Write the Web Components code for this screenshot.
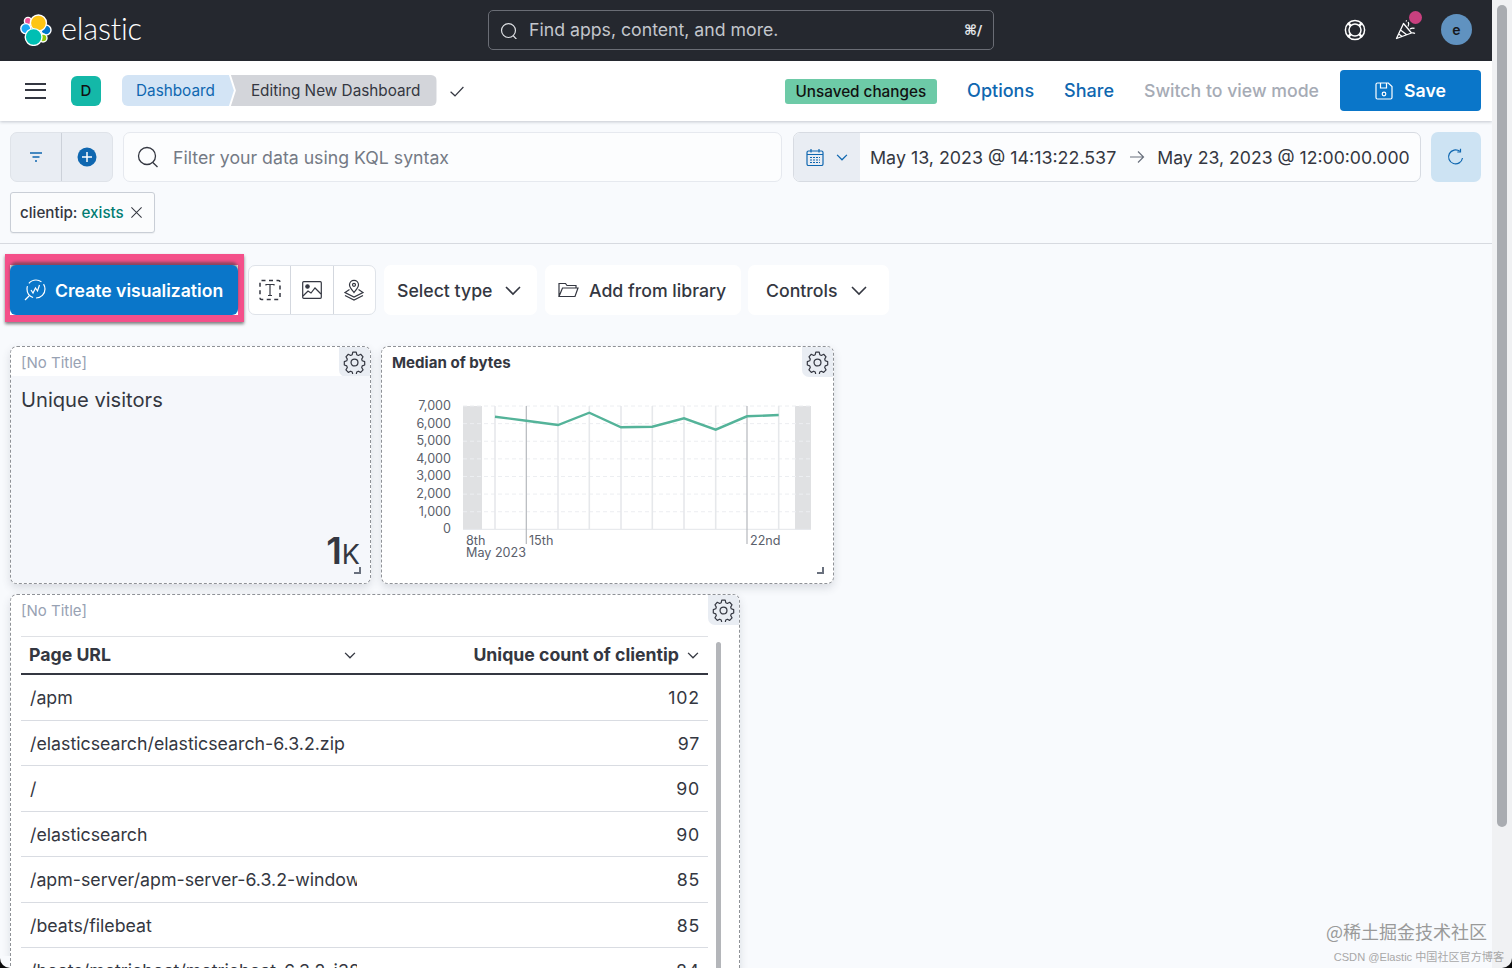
<!DOCTYPE html>
<html lang="en">
<head>
<meta charset="utf-8">
<title>Editing New Dashboard - Elastic</title>
<style>
html, body { margin: 0; height: 100%; overflow: hidden; background: #f8fafd; }
body { font-family: Inter, "Noto Sans CJK SC", sans-serif; color: #343741; }
</style>
</head>
<body>
<kbn-shell>
  <kbn-header></kbn-header>
  <kbn-nav></kbn-nav>
  <kbn-querybar></kbn-querybar>
  <kbn-toolbar></kbn-toolbar>
  <kbn-grid></kbn-grid>
</kbn-shell>
<script>
const ICONS = {
    search: `<circle cx="10" cy="10" r="8.2"/><path d="M15.6 16.2l4 4.3"/>`,
    gear: `<path d="M10.1 1.6h3.8l.6 2.9 1.7.8 2.6-1.3 2.6 2.8-1.5 2.5.6 1.8 2.7 1v3.7l-2.7 1-.6 1.8 1.5 2.5-2.6 2.8-2.6-1.3-1.7.8-.6 2.9h-3.8l-.6-2.9-1.7-.8-2.6 1.3-2.6-2.8 1.5-2.5-.6-1.8-2.7-1v-3.7l2.7-1 .6-1.8-1.5-2.5 2.6-2.8 2.6 1.3 1.7-.8z" transform="translate(.6 -.4) scale(.95)" stroke-linejoin="round"/><circle cx="12" cy="12" r="3.6"/>`,
    chevron: `<path d="M3 7l7 7 7-7"/>`,
    check: `<path d="M2 11l5.5 5L18 5"/>`,
    close: `<path d="M4 4l12 12M16 4L4 16"/>`
};

function define(tag, html) {
    customElements.define(tag, class extends HTMLElement {
        constructor() {
            super();
            this.attachShadow({mode: "open"}).innerHTML = html;
        }
    });
}

define("kbn-shell", `
<style>
:host { display: block; height: 968px; width: 1512px; position: relative; overflow: hidden; }
.main { width: 1492px; height: 968px; overflow: hidden; }
.track { position: absolute; top: 0; right: 0; bottom: 0; width: 20px; background: #f0f1f3; }
.thumb { margin: 5px 5px 0; width: 10px; height: 822px; border-radius: 5px; background: #a9acb1; }
.corner { position: absolute; bottom: 0; width: 10px; height: 12px; background: #0b0b0c; }
.corner.l { left: 0; }
.corner.r { right: 0; }
.corner::after { content: ""; position: absolute; inset: 0; }
.corner.l::after { border-bottom-left-radius: 10px; background: #f8fafd; }
.corner.r::after { border-bottom-right-radius: 10px; background: #f0f1f3; }
.mark { position: absolute; color: #9a9a9a; white-space: nowrap; }
.m1 { right: 25px; bottom: 26px; font: 18px/22px "Noto Sans CJK SC", sans-serif; }
.m2 { right: 8px; bottom: 4px; font: 11.1px/14px "Liberation Sans", "Noto Sans CJK SC", sans-serif; color: #a8a8a8; }
</style>
<div class="main"><slot></slot></div>
<div class="track"><div class="thumb"></div></div>
<div class="corner l"></div>
<div class="corner r"></div>
<div class="mark m1">@稀土掘金技术社区</div>
<div class="mark m2">CSDN @Elastic 中国社区官方博客</div>
`);

define("elastic-logo", `
<style>
:host { display: flex; align-items: center; gap: 9px; }
span { font: 300 30.6px/1 Lato, Inter, sans-serif; color: #fff; letter-spacing: -.2px; margin-top: -1px; }
</style>
<svg width="32" height="32" viewBox="0 0 32 32">
  <g stroke="#fff" stroke-width="1.4">
    <circle cx="8" cy="7" r="3.6" fill="#ee5097"/>
    <circle cx="5.8" cy="14.6" r="5" fill="#1ba9f5"/>
    <circle cx="26" cy="16" r="5" fill="#0077cc"/>
    <circle cx="23" cy="24" r="4" fill="#93c90e"/>
    <circle cx="18.4" cy="9" r="8" fill="#fec514"/>
    <circle cx="13.6" cy="23" r="8.4" fill="#00bfb3"/>
  </g>
</svg>
<span>elastic</span>
`);

define("kbn-header", `
<style>
:host { display: flex; align-items: center; height: 61px; background: #25282f; padding: 0 20px 1px; box-sizing: border-box; position: relative; }
.left { width: 468px; }
.search { width: 506px; height: 40px; box-sizing: border-box; border: 1px solid #6a6d75; border-radius: 5px; display: flex; align-items: center; padding: 0 11px; gap: 12px; color: #c3c6cc; font-size: 17.7px; }
.search span { flex: 1; margin-top: -1px; }
.search b { font: 700 14px "DejaVu Sans", sans-serif; color: #e6e8ec; }
.right { margin-left: auto; display: flex; align-items: center; margin-bottom: 1px; }
.btn { width: 24px; height: 24px; display: flex; align-items: center; justify-content: center; position: relative; }
.dot { position: absolute; right: -4px; top: -7px; width: 13px; height: 13px; border-radius: 50%; background: #c9407f; }
.avatar { width: 31px; height: 31px; border-radius: 50%; background: #6092c0; color: #16181d; font: 600 14px/31px Inter, sans-serif; text-align: center; }
</style>
<div class="left"><elastic-logo></elastic-logo></div>
<div class="search">
  <svg width="17" height="17" viewBox="0 0 20 20" fill="none" stroke="#dfe1e5" stroke-width="1.4">${ICONS.search}</svg>
  <span>Find apps, content, and more.</span>
  <b>⌘/</b>
</div>
<div class="right">
  <div class="btn" style="margin-right:27px">
    <svg width="22" height="22" viewBox="0 0 22 22" fill="none" stroke="#fff" stroke-width="1.5"><circle cx="11" cy="11" r="9.6"/><circle cx="11" cy="11" r="6"/><path d="M6.8 6.8L4.2 4.2M15.2 6.8l2.6-2.6M6.8 15.2l-2.6 2.6M15.2 15.2l2.6 2.6" stroke-width="2.6"/></svg>
  </div>
  <div class="btn" style="margin-right:23px">
    <svg width="22" height="22" viewBox="0 0 22 22" fill="none" stroke="#fff" stroke-width="1.3" stroke-linejoin="round"><path d="M8.5 4.5L1.5 19.5l15-5.5zM5.5 11l6.5 5M3.8 15l3.6 2.8"/><path d="M13 7.5c1-1.5 1-3 .2-4.5M15 10c1.5-1 3-1.2 4.5-.6M17 14c1.2-.5 2-.2 3 .6M11 1.5l.6.8"/></svg>
    <div class="dot"></div>
  </div>
  <div class="avatar">e</div>
</div>
`);

define("kbn-nav", `
<style>
:host { display: flex; align-items: center; height: 60px; background: #fff; box-shadow: 0 1px 3px rgba(40,50,70,.25); position: relative; font-size: 15.3px; padding: 0 11px 1px 25px; box-sizing: border-box; }
.menu { width: 21px; height: 16px; border-top: 2.5px solid #343741; border-bottom: 2.5px solid #343741; position: relative; box-sizing: border-box; margin-right: 25px; }
.menu::after { content: ""; position: absolute; left: 0; right: 0; top: 4.25px; height: 2.5px; background: #343741; }
.space { width: 30px; height: 30px; border-radius: 6px; background: #14b8a8; color: #111; font: 500 15px/30px Inter, sans-serif; text-align: center; margin-right: 21px; }
.crumbs { display: flex; height: 31px; line-height: 32px; }
.c1 { background: #d3e4f5; color: #0f67b0; padding: 0 19px 0 14px; border-radius: 6px 0 0 6px; clip-path: polygon(0 0, calc(100% - 5px) 0, 100% 50%, calc(100% - 5px) 100%, 0 100%); }
.c2 { background: #d3d5da; color: #343741; padding: 0 16px 0 20px; border-radius: 0 6px 6px 0; margin-left: -3px; clip-path: polygon(0 0, 100% 0, 100% 100%, 0 100%, 5px 50%); }
.check { margin-left: 12px; display: flex; }
.badge { margin-left: auto; margin-top: 2px; background: #6dcaa7; color: #111; border-radius: 3px; height: 25px; line-height: 25px; padding: 0 11px; font-size: 15.27px; font-weight: 500; }
a { font-size: 18px; font-weight: 500; color: #0f67b0; margin-left: 30px; }
a.off { color: #a6abb5; font-size: 17.7px; }
.save { margin-left: 21px; width: 141px; height: 41px; border-radius: 4px; background: #0a76c9; color: #fff; font-size: 17.7px; font-weight: 600; display: flex; align-items: center; justify-content: center; gap: 11px; }
</style>
<div class="menu"></div>
<div class="space">D</div>
<div class="crumbs"><div class="c1">Dashboard</div><div class="c2">Editing New Dashboard</div></div>
<div class="check"><svg width="16" height="16" viewBox="0 0 20 20" fill="none" stroke="#343741" stroke-width="1.5">${ICONS.check}</svg></div>
<div class="badge">Unsaved changes</div>
<a>Options</a>
<a>Share</a>
<a class="off">Switch to view mode</a>
<div class="save">
  <svg width="18" height="18" viewBox="0 0 18 18" fill="none" stroke="#fff" stroke-width="1.2"><path d="M1 2.5A1.5 1.5 0 0 1 2.5 1h10.8L17 4.5v11a1.5 1.5 0 0 1-1.5 1.5h-13A1.5 1.5 0 0 1 1 15.5z"/><path d="M5.5 1v5h6V1"/><circle cx="9" cy="12" r="1.8"/></svg>
  Save
</div>
`);

define("filter-pill", `
<style>
:host { display: inline-flex; align-items: center; height: 41px; box-sizing: border-box; border: 1px solid #c9ced6; border-radius: 3px; background: #fbfcfd; padding: 0 9px 0 9px; font-size: 15.2px; font-weight: 500; gap: 4px; box-shadow: 0 1px 1px rgba(0,0,0,.05); }
em { font-style: normal; color: #017d73; }
svg { display: block; }
</style>
<span>clientip: <em>exists</em></span>
<svg width="17" height="17" viewBox="0 0 20 20" fill="none" stroke="#343741" stroke-width="1.2">${ICONS.close}</svg>
`);

define("kbn-querybar", `
<style>
:host { display: block; padding: 11px 11px 0 10px; height: 122px; box-sizing: border-box; position: relative; }
.row { display: flex; height: 50px; }
.group { display: flex; width: 103px; height: 50px; box-sizing: border-box; border: 1px solid #dfe3e9; border-radius: 7px; background: #e9edf3; overflow: hidden; }
.group > div { flex: 1; display: flex; align-items: center; justify-content: center; }
.group > div + div { border-left: 1px solid #ccd1d9; }
.input { margin-left: 10px; width: 659px; box-sizing: border-box; border: 1px solid #e6e9ef; border-radius: 7px; background: #fcfdfe; display: flex; align-items: center; padding-left: 13px; gap: 14px; font-size: 17.7px; color: #747a85; }
.dates { margin-left: 11px; width: 628px; box-sizing: border-box; border: 1px solid #d7dbe2; border-radius: 7px; background: #fcfdfe; display: flex; align-items: center; font-size: 17.85px; color: #343741; overflow: hidden; white-space: nowrap; }
.cal { width: 66px; height: 100%; background: #e9edf3; display: flex; align-items: center; justify-content: center; gap: 11px; }
.from { margin-left: 10px; }
.to { font-size: 17.65px; }
.arrow { margin: 0 12px 0 13px; display: flex; }
.refresh { margin-left: 10px; width: 50px; border-radius: 7px; background: #cde3f3; display: flex; align-items: center; justify-content: center; }
.pills { margin-top: 10px; display: flex; }
.rule { position: absolute; left: 0; right: 0; top: 122px; height: 1px; background: #d7dae0; }
</style>
<div class="row">
  <div class="group">
    <div><svg width="16" height="16" viewBox="0 0 16 16" fill="none" stroke="#0f67b0" stroke-width="1.3"><path d="M2 4h12M4.5 8h7M7 12h2"/></svg></div>
    <div><svg width="20" height="20" viewBox="0 0 20 20"><circle cx="10" cy="10" r="9.5" fill="#0f67b0"/><path d="M10 5v10M5 10h10" stroke="#fff" stroke-width="1.5"/></svg></div>
  </div>
  <div class="input">
    <svg width="22" height="22" viewBox="0 0 22 22" fill="none" stroke="#343741" stroke-width="1.3"><circle cx="10" cy="10" r="8.5"/><path d="M15.8 16.5l4.7 4.5"/></svg>
    <span>Filter your data using KQL syntax</span>
  </div>
  <div class="dates">
    <div class="cal">
      <svg width="18" height="18" viewBox="0 0 18 18" fill="none" stroke="#0f67b0" stroke-width="1.2"><rect x="1" y="3" width="16" height="14.5" rx="1.5"/><path d="M1 6.5h16M5 1v3.5M13 1v3.5"/><path d="M4 9.5h10M4 12h10M4 14.5h10" stroke-dasharray="2 1"/></svg>
      <svg width="14" height="14" viewBox="0 0 20 20" fill="none" stroke="#0f67b0" stroke-width="1.8">${ICONS.chevron}</svg>
    </div>
    <span class="from">May 13, 2023 @ 14:13:22.537</span>
    <span class="arrow"><svg width="16" height="16" viewBox="0 0 16 16" fill="none" stroke="#69707d" stroke-width="1.2"><path d="M1 8h13.5M9 2.5L14.5 8 9 13.5"/></svg></span>
    <span class="to">May 23, 2023 @ 12:00:00.000</span>
  </div>
  <div class="refresh">
    <svg width="18" height="18" viewBox="0 0 18 18" fill="none" stroke="#0f67b0" stroke-width="1.2"><path d="M15.5 10a7 7 0 1 1-2.7-6.7"/><path d="M13.5 .8V4h-3.2"/></svg>
  </div>
</div>
<div class="pills"><filter-pill></filter-pill></div>
<div class="rule"></div>
`);

define("kbn-toolbar", `
<style>
:host { display: flex; align-items: center; height: 50px; margin-top: 22px; padding-left: 10px; font-size: 17.7px; color: #343741; white-space: nowrap; }
.frame { margin: -11px 4px -7px -5px; padding: 11px 6px 7px 5px; background: #f4508a; box-shadow: 0 2px 3px rgba(0,0,0,.5); }
.inner { background: #fff; }
.create { width: 228px; height: 50px; box-sizing: border-box; background: #0a76c9; color: #fff; border-radius: 6px; display: flex; align-items: center; padding-left: 14px; gap: 9px; font-weight: 600; font-size: 17.6px; box-shadow: 0 -3px 3px rgba(60,60,60,.55); }
.icons { display: flex; width: 128px; height: 50px; box-sizing: border-box; border: 1px solid #dfe3e9; border-radius: 7px; background: #fff; }
.icons div { flex: 1; display: flex; align-items: center; justify-content: center; }
.icons div + div { border-left: 1px solid #d3d7de; }
.tool { height: 50px; box-sizing: border-box; background: #fff; border-radius: 7px; margin-left: 8px; display: flex; align-items: center; font-weight: 500; }
.select { width: 153px; padding: 0 14px 0 13px; justify-content: space-between; }
.library { width: 196px; padding-left: 13px; gap: 10px; }
.controls { width: 141px; padding: 0 20px 0 18px; justify-content: space-between; margin-left: 7px; }
</style>
<div class="frame"><div class="inner"><div class="create">
  <svg width="22" height="22" viewBox="0 0 22 22" fill="none" stroke="#fff" stroke-width="1.2"><circle cx="12" cy="10" r="9" stroke-dasharray="14 3"/><path d="M7 11l2 3 2.5-5 2 3 2-6"/><path d="M5 17l-4 4"/></svg>
  Create visualization
</div></div></div>
<div class="icons">
  <div><svg width="22" height="22" viewBox="0 0 22 22" fill="none" stroke="#343741" stroke-width="1.5"><rect x="1" y="1.5" width="20" height="19" rx="1.5" stroke-dasharray="4 3.5"/><path d="M7 6.5v-1h8v1M11 5.5v11M9 16.5h4" stroke-width="1.2"/></svg></div>
  <div><svg width="20" height="18" viewBox="0 0 20 18" fill="none" stroke="#343741" stroke-width="1.2"><rect x=".7" y=".7" width="18.6" height="16.6" rx="1"/><circle cx="5.5" cy="5.5" r="1.7" fill="#343741"/><path d="M1 15l5-5 3 2 4-5 6 6"/></svg></div>
  <div><svg width="20" height="22" viewBox="0 0 20 22" fill="none" stroke="#343741" stroke-width="1.2"><path d="M10 13.5C7.5 10.5 5.5 8.5 5.5 5.8a4.5 4.5 0 0 1 9 0c0 2.7-2 4.7-4.500 7.7z"/><circle cx="10" cy="5.8" r="1.5"/><path d="M5.5 10.5L1 13.500l9 4.500 9-4.500-4.500-3M1 16.500l9 4.500 9-4.500"/></svg></div>
</div>
<div class="tool select">Select type
  <svg width="20" height="20" viewBox="0 0 20 20" fill="none" stroke="#343741" stroke-width="1.6">${ICONS.chevron}</svg></div>
<div class="tool library">
  <svg width="21" height="18" viewBox="0 0 21 18" fill="none" stroke="#343741" stroke-width="1.2"><path d="M1 15.5v-13h6.500l1.500 2h9V7M1 15.500h16L20 7H4.500z"/></svg>
  Add from library</div>
<div class="tool controls">Controls
  <svg width="20" height="20" viewBox="0 0 20 20" fill="none" stroke="#343741" stroke-width="1.6">${ICONS.chevron}</svg></div>
`);

define("dash-panel", `
<style>
:host { display: flex; flex-direction: column; box-sizing: border-box; border: 1px dashed #8f9297; border-radius: 7px; background: #fff; box-shadow: 0 4px 9px rgba(60,70,90,.16); position: relative; flex: none; }
.head { height: 29px; padding-left: 10px; line-height: 32px; font-size: 15px; color: #98a2b3; }
:host([bold]) .head { color: #343741; font-weight: 700; font-size: 15.1px; }
.gear { position: absolute; right: 0; top: 0; width: 31px; height: 30px; background: #e9edf3; border-radius: 0 6px 0 7px; display: flex; align-items: center; justify-content: center; }
.body { flex: 1; min-height: 0; position: relative; }
.grip { position: absolute; right: 9px; bottom: 9px; width: 7px; height: 7px; border-right: 2px solid #69707d; border-bottom: 2px solid #69707d; box-sizing: border-box; }
:host([nogrip]) .grip { display: none; }
</style>
<div class="head"><slot name="title"></slot></div>
<div class="gear"><svg width="23" height="23" viewBox="0 0 24 24" fill="none" stroke="#343741" stroke-width="1.3">${ICONS.gear}</svg></div>
<div class="body"><slot></slot></div>
<div class="grip"></div>
`);

define("metric-viz", `
<style>
:host { display: flex; flex-direction: column; height: 100%; background: #f5f7fb; padding: 8px 10px 6px; box-sizing: border-box; color: #343741; border-radius: 0 0 6px 6px; }
.t { font-size: 20.15px; line-height: 32px; }
.v { margin-top: auto; text-align: right; font-size: 37px; font-weight: 600; line-height: 44px; }
.v span { font-size: 27px; font-weight: 400; }
</style>
<div class="t">Unique visitors</div>
<div class="v">1<span>K</span></div>
`);

const LINE_XS = [113, 144.3, 176, 207.3, 239, 270.3, 302, 333.7, 365, 396.7];
const LINE_YS = [40.7, 44.7, 49, 36.7, 51.3, 50.7, 42.3, 53.7, 40.3, 39];

class LineChart extends HTMLElement {
    constructor() {
        super();
        let s = `<rect x="81" y="30" width="19" height="123.3" fill="#e0e1e3"/><rect x="413" y="30" width="16" height="123.3" fill="#e0e1e3"/>`;
        ["7,000","6,000","5,000","4,000","3,000","2,000","1,000","0"].forEach((t, i) => {
            const y = 30 + i * 17.62;
            if (i < 7) s += `<line x1="81" x2="429" y1="${y}" y2="${y}" stroke="#eceef1" stroke-dasharray="4 3"/>`;
            s += `<text x="69" y="${y + 4}" text-anchor="end">${t}</text>`;
        });
        s += `<line x1="81" x2="429" y1="153.3" y2="153.3" stroke="#e3e5e9"/>`;
        LINE_XS.forEach((x, i) => {
            const dark = i === 1 || i === 8;
            s += `<line x1="${x}" x2="${x}" y1="30" y2="${dark ? 168 : 153}" stroke="${dark ? "#b5b8bd" : "#e6e8eb"}" stroke-width="${dark ? 1.2 : 1.6}"/>`;
        });
        s += `<polyline fill="none" stroke="#54b399" stroke-width="2.4" points="${LINE_XS.map((x, i) => x + "," + LINE_YS[i]).join(" ")}"/>`;
        s += `<text x="84" y="169">8th</text><text x="84" y="181">May 2023</text><text x="147" y="169">15th</text><text x="368" y="169">22nd</text>`;
        this.attachShadow({mode: "open"}).innerHTML = `
<style>
:host { display: block; }
svg { display: block; }
text { font: 12.6px Inter, sans-serif; fill: #5a606b; }
</style>
<svg width="452" height="205" viewBox="0 0 452 205">${s}</svg>
`;
    }
}
customElements.define("line-chart", LineChart);

define("url-table", `
<style>
:host { display: block; position: relative; padding: 12px 0 0 10px; font-size: 17.7px; color: #343741; }
.t { width: 687px; }
.hd { display: flex; height: 39px; border-top: 1px solid #dfe1e5; border-bottom: 2px solid #343741; box-sizing: border-box; font-weight: 700; line-height: 36px; align-items: center; }
.hd div { display: flex; align-items: center; box-sizing: border-box; }
.hd .a { width: 336px; padding-left: 8px; justify-content: space-between; }
.hd .b { flex: 1; justify-content: flex-end; padding-right: 8px; gap: 7px; }
.sb { position: absolute; left: 705px; top: 18px; width: 5px; height: 400px; background: #b4b6ba; border-radius: 3px; }
</style>
<div class="t">
  <div class="hd">
    <div class="a">Page URL<svg width="14" height="14" viewBox="0 0 20 20" fill="none" stroke="#343741" stroke-width="1.9">${ICONS.chevron}</svg></div>
    <div class="b">Unique count of clientip<svg width="14" height="14" viewBox="0 0 20 20" fill="none" stroke="#343741" stroke-width="1.9">${ICONS.chevron}</svg></div>
  </div>
  <slot></slot>
</div>
<div class="sb"></div>
`);

define("url-row", `
<style>
:host { display: flex; height: 45.5px; box-sizing: border-box; border-bottom: 1px solid #d9dce2; line-height: 45px; font-size: 17.75px; }
.a { width: 336px; padding-left: 9px; box-sizing: border-box; overflow: hidden; white-space: nowrap; }
.b { flex: 1; text-align: right; padding-right: 8px; letter-spacing: .8px; }
</style>
<div class="a"><slot></slot></div>
<div class="b"><slot name="n"></slot></div>
`);

define("kbn-grid", `
<style>
:host { display: block; padding: 31px 0 0 10px; }
.row { display: flex; gap: 10px; }
.row + .row { margin-top: 10px; }
</style>
<div class="row">
  <dash-panel style="width:361px;height:238px"><span slot="title">[No Title]</span><metric-viz></metric-viz></dash-panel>
  <dash-panel bold style="width:453px;height:238px"><span slot="title">Median of bytes</span><line-chart></line-chart></dash-panel>
</div>
<div class="row">
  <dash-panel nogrip style="width:730px;height:480px"><span slot="title">[No Title]</span>
    <url-table>
      <url-row>/apm<span slot="n">102</span></url-row>
      <url-row>/elasticsearch/elasticsearch-6.3.2.zip<span slot="n">97</span></url-row>
      <url-row>/<span slot="n">90</span></url-row>
      <url-row>/elasticsearch<span slot="n">90</span></url-row>
      <url-row>/apm-server/apm-server-6.3.2-windows-x86.zip<span slot="n">85</span></url-row>
      <url-row>/beats/filebeat<span slot="n">85</span></url-row>
      <url-row>/beats/metricbeat/metricbeat-6.3.2-i386.deb<span slot="n">84</span></url-row>
    </url-table>
  </dash-panel>
</div>
`);
</script>
</body>
</html>
